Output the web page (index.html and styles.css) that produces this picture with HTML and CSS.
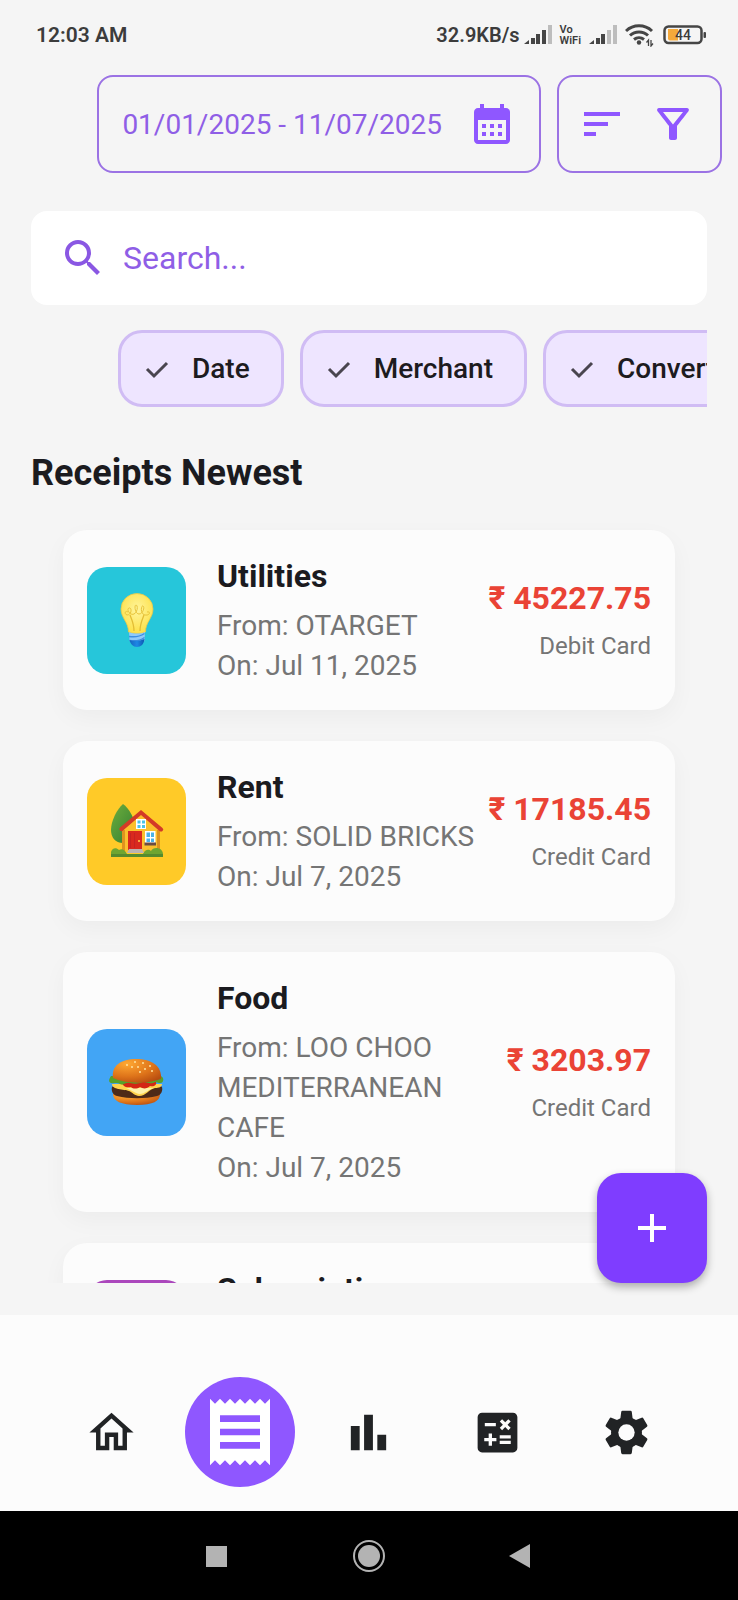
FILE: index.html
```html
<!DOCTYPE html>
<html lang="en">
<head>
<meta charset="utf-8">
<meta name="viewport" content="width=device-width, initial-scale=1">
<title>Receipts</title>
<link rel="stylesheet" href="styles.css">
</head>
<body>
<div class="status">
  <span class="status-time">12:03 AM</span>
  <div class="status-right">
    <span class="status-speed">32.9KB/s</span>
    <svg class="signal" viewBox="0 0 28 20" fill="#454545"><path d="M0 19l5-4v4zM7 13h4v6H7zM12 9h4v10h-4zM18 5h4v14h-4z"/><path fill="#bdbdbd" d="M24 0h4v19h-4z"/></svg>
    <span class="vowifi"><span>Vo</span><span>WiFi</span></span>
    <svg class="signal" viewBox="0 0 28 20" fill="#454545"><path d="M0 19l5-4v4zM7 13h4v6H7zM12 9h4v10h-4z"/><path fill="#bdbdbd" d="M18 5h4v14h-4zM24 0h4v19h-4z"/></svg>
    <svg class="wifi" viewBox="0 0 30 24" fill="none" stroke="#454545" stroke-width="3"><path d="M1 8a19 19 0 0 1 26 0M5 12.500a13 13 0 0 1 18 0M9 16.500a8 8 0 0 1 10 0"/><circle cx="14" cy="19.500" r="2.200" fill="#454545" stroke="none"/><path stroke-width="1.300" d="M23.500 23v-6l-2 2.500M26 17v6l2-2.500"/></svg>
    <svg class="battery" viewBox="0 0 44 20"><rect x="1.500" y="1.500" width="37" height="16.500" rx="4" fill="none" stroke="#454545" stroke-width="2.500"/><path d="M5 4h10v11.500H7a2 2 0 0 1-2-2z" fill="#f5a93b"/><rect x="40.500" y="7" width="2.500" height="6" rx="1" fill="#454545"/><text x="20" y="15" text-anchor="middle" class="battery-text">44</text></svg>
  </div>
</div>

<main class="page">
  <div class="toolbar">
    <button class="box date-box" type="button">
      <span>01/01/2025 - 11/07/2025</span>
      <svg class="icon" viewBox="0 0 24 24"><path d="M19 4h-1V2h-2v2H8V2H6v2H5c-1.110 0-1.990.9-1.990 2L3 20c0 1.100.89 2 2 2h14c1.100 0 2-.9 2-2V6c0-1.100-.9-2-2-2zm0 16H5V10h14v10zM9 14H7v-2h2v2zm4 0h-2v-2h2v2zm4 0h-2v-2h2v2zm-8 4H7v-2h2v2zm4 0h-2v-2h2v2zm4 0h-2v-2h2v2z"/></svg>
    </button>
    <div class="box tools">
      <button class="tool" type="button" aria-label="Sort"><svg class="icon" viewBox="0 0 24 24"><path d="M3 18h6v-2H3v2zM3 6v2h18V6H3zm0 7h12v-2H3v2z"/></svg></button>
      <button class="tool" type="button" aria-label="Filter"><svg class="icon" viewBox="0 0 24 24"><path d="M7 6h10l-5.010 6.300L7 6zm-2.750-.39C6.270 8.200 10 13 10 13v6c0 .55.45 1 1 1h2c.55 0 1-.45 1-1v-6s3.720-4.800 5.740-7.390A.998.998 0 0 0 18.950 4H5.040c-.83 0-1.300.95-.79 1.610z"/></svg></button>
    </div>
  </div>

  <label class="search">
    <svg class="icon" viewBox="0 0 24 24"><path d="M15.500 14h-.79l-.28-.27A6.471 6.471 0 0 0 16 9.500 6.500 6.500 0 1 0 9.500 16c1.610 0 3.090-.59 4.230-1.570l.27.28v.79l5 4.990L20.490 19l-4.990-5zm-6 0C7.010 14 5 11.990 5 9.500S7.010 5 9.500 5 14 7.010 14 9.500 11.990 14 9.500 14z"/></svg>
    <input class="search-input" type="text" placeholder="Search..." aria-label="Search">
  </label>

  <div class="chips">
    <button class="chip" type="button" aria-pressed="true"><svg class="check" viewBox="0 0 24 24"><path d="M2 12l7 7L22 6"/></svg>Date</button>
    <button class="chip" type="button" aria-pressed="true"><svg class="check" viewBox="0 0 24 24"><path d="M2 12l7 7L22 6"/></svg>Merchant</button>
    <button class="chip" type="button" aria-pressed="true"><svg class="check" viewBox="0 0 24 24"><path d="M2 12l7 7L22 6"/></svg>Converted</button>
  </div>

  <h1 class="heading">Receipts Newest</h1>

  <div class="list">
    <article class="card">
      <div class="tile tile-utilities">
        <svg class="emoji" viewBox="0 0 56 56">
          <defs>
            <radialGradient id="glass" cx=".5" cy=".4" r=".6"><stop offset="0" stop-color="#fff59d"/><stop offset="1" stop-color="#fde047"/></radialGradient>
            <linearGradient id="cap" x2="1"><stop stop-color="#1565c0"/><stop offset=".5" stop-color="#1e88e5"/><stop offset="1" stop-color="#0d56b0"/></linearGradient>
          </defs>
          <path d="M19.500 40C19.500 30 12 26 12 17a16 15.500 0 0 1 32 0c0 9-7.500 13-7.500 23-4 2-13 2-17 0z" fill="url(#glass)" stroke="#e8c94a" stroke-width=".8"/>
          <path d="M25 39c0-7-2-11-4-16M31 39c0-7 2-11 4-16" fill="none" stroke="#e3bd35" stroke-width="1.300"/>
          <path d="M19 20c-3-2-4 2-1 3 5 0 5-8 2-7s1 8 5 6 4-9 2-9-1 9 3 9 6-7 4-8-3 8 2 9 6-4 2-3" fill="none" stroke="#e8c43c" stroke-width="1"/>
          <path d="M20 40c5 2 11 2 16 0l-.5 9c-5 2-10 2-15 0z" fill="#90caf9"/>
          <path d="M20 44.500c6 1 11 0 15.500-3M20.500 48.500c6 1 11 0 15-3" fill="none" stroke="#3f8fe0" stroke-width="1.500"/>
          <path d="M20.500 48c5 1.500 10 1 15-1-.5 5-3.500 8-7.500 8s-6.500-3-7.500-7z" fill="url(#cap)"/>
        </svg>
      </div>
      <div class="info">
        <h2 class="title">Utilities</h2>
        <p class="detail">From: OTARGET</p>
        <p class="detail">On: Jul 11, 2025</p>
      </div>
      <div class="payment">
        <span class="amount">₹ 45227.75</span>
        <span class="method">Debit Card</span>
      </div>
    </article>

    <article class="card">
      <div class="tile tile-rent">
        <svg class="emoji" viewBox="0 0 56 56">
          <defs>
            <linearGradient id="tree" x2="1" y2="1"><stop stop-color="#6fae3c"/><stop offset="1" stop-color="#2e7d32"/></linearGradient>
          </defs>
          <path d="M14 1C8 6 2 18 2 27c0 7 4 13 12 13s13-6 13-14C26 16 20 5 14 1z" fill="url(#tree)"/>
          <path d="M13 27L32 11l19 16v22H13z" fill="#fbc02d"/>
          <path d="M13 27h3v22h-3zM48 27h3v22h-3z" fill="#e0931f"/>
          <path d="M11 27.500a2 2 0 0 1 0-3L32 7l21.500 18a2 2 0 0 1 0 3c-1 .8-2 .6-3 0L32 12 14 27.500c-1 1-2 1-3 0z" fill="#d33a27"/>
          <rect x="27" y="16" width="10" height="10" fill="#fff"/>
          <path d="M28.500 17.500h3v3h-3zM33 17.500h3v3h-3zM28.500 22h3v3h-3zM33 22h3v3h-3z" fill="#4cc3e8"/>
          <rect x="19" y="28" width="14" height="19" fill="#d9281e"/>
          <path d="M21.500 30v15M25.500 30v15" stroke="#c62222" stroke-width="1"/>
          <circle cx="30" cy="38" r="1" fill="#ffd54f"/>
          <rect x="36" y="28" width="10.500" height="12" fill="#fff"/>
          <path d="M37.500 29.500h3.500V34h-3.500zM42 29.500h3V34h-3zM37.500 35.500h3.500V39h-3.500zM42 35.500h3V39h-3z" fill="#4cb2e8"/>
          <rect x="35.500" y="39.500" width="11.500" height="3" fill="#6d4c41"/>
          <path d="M2 54v-5c1-4 5-5 8-2 3-2 6 0 8 4h16c2-5 6-5 8-3 2-5 12-4 12 3v3z" fill="#6fa531"/>
          <path d="M18 50l2-4h13l2 4z" fill="#bdb3b0"/>
          <path d="M2 51h52v3H2z" fill="#558b2f"/>
        </svg>
      </div>
      <div class="info">
        <h2 class="title">Rent</h2>
        <p class="detail">From: SOLID BRICKS</p>
        <p class="detail">On: Jul 7, 2025</p>
      </div>
      <div class="payment">
        <span class="amount">₹ 17185.45</span>
        <span class="method">Credit Card</span>
      </div>
    </article>

    <article class="card">
      <div class="tile tile-food">
        <svg class="emoji" viewBox="0 0 56 56">
          <defs>
            <radialGradient id="bun" cx=".3" cy=".2" r=".9"><stop stop-color="#ffa832"/><stop offset=".6" stop-color="#de741a"/><stop offset="1" stop-color="#b84d10"/></radialGradient>
          </defs>
          <path d="M4 40c0 7 8 11 24 11s23-4 23-11z" fill="url(#bun)"/>
          <path d="M3 33c0-3 50-3 50 0 1 4-1 8-5 9-12 3-28 3-40 0-4-1-6-5-5-9z" fill="#4e2a17"/>
          <path d="M3 30h50c0 3-3 4-7 4-6 1-9 8-16 8-4 0-7-4-10-5-5-2-17-1-17-7z" fill="#ffd34d"/>
          <path d="M16 34c4 0 10 6 15 6s9-5 14-6z" fill="#fff0a8"/>
          <path d="M13 28h34c1 3-2 5-6 4-3 3-7 3-10 1-3 2-7 2-9 0-5 1-9-1-9-5z" fill="#d32515"/>
          <path d="M2 22c-2 3-3 6 0 7 3 1 6-1 9 1 4 2 5-2 10-1 5 1 8 1 13-1 5 0 7 3 12 0 4 1 7 2 8-1s-1-5-3-5z" fill="#55a22c"/>
          <path d="M4 24C2 12 12 5 27 5c16 0 26 7 25 20-13 5-36 5-48-1z" fill="url(#bun)"/>
          <g fill="#ffe3a0"><circle cx="26" cy="8" r="1"/><circle cx="34" cy="9" r="1"/><circle cx="41" cy="12" r="1"/><circle cx="29" cy="13" r="1"/><circle cx="36" cy="15" r="1"/><circle cx="23" cy="13" r="1"/><circle cx="43" cy="17" r="1"/><circle cx="31" cy="18" r="1"/><circle cx="18" cy="11" r="1"/></g>
        </svg>
      </div>
      <div class="info">
        <h2 class="title">Food</h2>
        <p class="detail">From: LOO CHOO MEDITERRANEAN CAFE</p>
        <p class="detail">On: Jul 7, 2025</p>
      </div>
      <div class="payment">
        <span class="amount">₹ 3203.97</span>
        <span class="method">Credit Card</span>
      </div>
    </article>

    <article class="card">
      <div class="tile tile-subscriptions"></div>
      <div class="info">
        <h2 class="title">Subscriptions</h2>
      </div>
    </article>
  </div>

  <button class="fab" type="button" aria-label="Add receipt"><svg viewBox="0 0 28 28"><path d="M14 0v28M0 14h28" stroke="#fff" stroke-width="4"/></svg></button>
</main>

<nav class="nav">
  <a class="nav-item" href="#home" aria-label="Home"><svg viewBox="0 0 24 24"><path d="M12 5.690l5 4.500V18h-2v-6H9v6H7v-7.810l5-4.500M12 3L2 12h3v8h6v-6h2v6h6v-8h3L12 3z"/></svg></a>
  <a class="nav-item nav-active" href="#receipts" aria-label="Receipts"><svg viewBox="0 0 24 24"><path d="M18 17H6v-2h12v2zm0-4H6v-2h12v2zm0-4H6V7h12v2zM3 22l1.500-1.500L6 22l1.500-1.500L9 22l1.500-1.500L12 22l1.500-1.500L15 22l1.500-1.500L18 22l1.500-1.500L21 22V2l-1.500 1.500L18 2l-1.500 1.500L15 2l-1.500 1.500L12 2l-1.500 1.500L9 2 7.500 3.500 6 2 4.500 3.500 3 2v20z"/></svg></a>
  <a class="nav-item" href="#stats" aria-label="Statistics"><svg viewBox="0 0 24 24"><path d="M4 9h4v11H4zM16 13h4v7h-4zM10 4h4v16h-4z"/></svg></a>
  <a class="nav-item" href="#calculator" aria-label="Calculator"><svg viewBox="0 0 24 24"><path d="M19 3H5c-1.100 0-2 .9-2 2v14c0 1.100.9 2 2 2h14c1.100 0 2-.9 2-2V5c0-1.100-.9-2-2-2zm-5.970 4.060L14.090 6l1.410 1.410L16.910 6l1.060 1.060-1.410 1.410 1.410 1.410-1.060 1.060-1.410-1.400-1.410 1.410-1.060-1.060 1.410-1.410-1.410-1.420zm-6.780.66h5v1.500h-5v-1.500zM11.500 16h-2v2H8v-2H6v-1.500h2v-2h1.500v2h2V16zm6.500 1.250h-5v-1.500h5v1.500zm0-2.500h-5v-1.500h5v1.500z"/></svg></a>
  <a class="nav-item" href="#settings" aria-label="Settings"><svg viewBox="0 0 24 24">
    <defs><path id="teeth" d="M9.600 2.700a.6.6 0 0 1 .6-.5h3.600a.6.6 0 0 1 .6.500l.5 4v10.600l-.5 4a.6.6 0 0 1-.6.500h-3.600a.6.6 0 0 1-.6-.5l-.5-4V6.700z"/></defs>
    <circle cx="12" cy="12" r="7"/>
    <use href="#teeth"/><use href="#teeth" transform="rotate(60 12 12)"/><use href="#teeth" transform="rotate(120 12 12)"/>
    <circle cx="12" cy="12" r="3.700" fill="#fcfcfc"/></svg></a>
</nav>

<div class="system-bar">
  <button class="system-key" type="button" aria-label="Recent apps"><svg viewBox="0 0 32 32"><path d="M5 6h21v21H5z"/></svg></button>
  <button class="system-key" type="button" aria-label="Home screen"><svg viewBox="0 0 32 32"><circle cx="16" cy="16" r="11"/><circle cx="16" cy="16" r="15" fill="none" stroke="#b3b3b3" stroke-width="2"/></svg></button>
  <button class="system-key" type="button" aria-label="Back"><svg viewBox="0 0 32 32"><path d="M4 16L25 4v24z"/></svg></button>
</div>
</body>
</html>
```

FILE: styles.css
```css
* {
  box-sizing: border-box;
}

body {
  margin: 0;
  height: 100vh;
  display: flex;
  flex-direction: column;
  background: #f5f5f5;
  color: #1b1b1f;
  font-family: Roboto, "Noto Sans", sans-serif;
}

button {
  font: inherit;
  color: inherit;
  cursor: pointer;
}

svg {
  display: block;
  flex: none;
}

/* Status bar */
.status {
  display: flex;
  align-items: center;
  justify-content: space-between;
  height: 70px;
  padding: 0 31px 0 36px;
  color: #3c3c3c;
  font-weight: 600;
}

.status-time {
  font-size: 21px;
}

.status-right {
  display: flex;
  align-items: center;
  gap: 8px;
}

.status-speed {
  font-size: 20px;
  margin-right: -4px;
}

.signal {
  width: 28px;
  height: 20px;
}

.vowifi {
  display: flex;
  flex-direction: column;
  font-size: 11px;
  line-height: 11px;
}

.wifi {
  width: 30px;
  height: 24px;
}

.battery {
  width: 44px;
  height: 20px;
}

.battery-text {
  font-size: 14px;
  font-weight: 500;
  fill: #3c3c3c;
}

/* Page */
.page {
  position: relative;
  flex: 1;
  min-height: 0;
  display: flex;
  flex-direction: column;
  padding: 5px 0 32px;
}

.icon {
  width: 48px;
  height: 48px;
  fill: #8f57ff;
}

.toolbar {
  display: flex;
  justify-content: flex-end;
  gap: 16px;
  padding: 0 16px;
}

.box {
  display: flex;
  align-items: center;
  height: 98px;
  border: 2px solid #9b72e4;
  border-radius: 16px;
  background: none;
}

.date-box {
  gap: 26px;
  padding: 0 23px;
  color: #8f5ee6;
  font-size: 28px;
}

.tools {
  gap: 23px;
  padding: 0 23px 0 19px;
}

.tool {
  padding: 0;
  border: 0;
  background: none;
}

.search {
  display: flex;
  align-items: center;
  gap: 16px;
  height: 94px;
  margin: 38px 31px 0;
  padding: 0 28px;
  border-radius: 16px;
  background: #fff;
}

.search .icon {
  fill: #8a57e3;
}

.search-input {
  flex: 1;
  min-width: 0;
  padding: 0;
  border: 0;
  outline: 0;
  background: none;
  color: #8f5ee6;
  font: 32px Roboto, "Noto Sans", sans-serif;
}

.search-input::placeholder {
  color: #8f5ee6;
  opacity: 1;
}

.chips {
  display: flex;
  flex: none;
  gap: 16px;
  margin: 25px 31px 0 118px;
  overflow-x: auto;
  scrollbar-width: none;
}

.chip {
  display: flex;
  flex: none;
  align-items: center;
  gap: 23px;
  height: 77px;
  padding: 0 31px 0 24px;
  border: 3px solid #d0bcf4;
  border-radius: 24px;
  background: #eee5ff;
  color: #1d1b20;
  font-size: 28px;
  font-weight: 500;
}

.check {
  width: 24px;
  height: 24px;
  fill: none;
  stroke: #49454f;
  stroke-width: 3;
}

.heading {
  margin: 44px 31px 0;
  font-size: 36px;
  line-height: 44px;
  font-weight: 700;
}

/* Receipt list */
.list {
  flex: 1;
  min-height: 0;
  display: flex;
  flex-direction: column;
  gap: 31px;
  margin-top: 11px;
  padding: 24px 63px 0;
  overflow-y: auto;
  scrollbar-width: none;
}

.card {
  display: flex;
  flex: none;
  align-items: center;
  min-height: 180px;
  padding: 24px;
  border-radius: 24px;
  background: #fcfcfc;
  box-shadow: 0 8px 24px rgba(0, 0, 0, 0.04);
}

.tile {
  display: flex;
  flex: none;
  align-items: center;
  justify-content: center;
  width: 99px;
  height: 107px;
  margin-right: 31px;
  border-radius: 20px;
}

.tile-utilities {
  background: #26c6da;
}

.tile-rent {
  background: #ffca28;
}

.tile-food {
  background: #42a5f5;
}

.tile-subscriptions {
  background: #ab47bc;
}

.emoji {
  width: 56px;
  height: 56px;
}

.info {
  flex: 1;
  align-self: flex-start;
  min-width: 0;
}

.title {
  margin: 0 0 8px;
  font-size: 32px;
  line-height: 44px;
  font-weight: 700;
}

.detail {
  margin: 0;
  color: #757575;
  font-size: 28px;
  line-height: 40px;
}

.payment {
  display: flex;
  flex: none;
  flex-direction: column;
  align-items: flex-end;
  gap: 12px;
}

.amount {
  color: #ea4335;
  font-size: 32px;
  line-height: 40px;
  font-weight: 700;
}

.method {
  color: #757575;
  font-size: 24px;
  line-height: 32px;
}

.fab {
  position: absolute;
  right: 31px;
  bottom: 32px;
  display: flex;
  align-items: center;
  justify-content: center;
  width: 110px;
  height: 110px;
  padding: 0;
  border: 0;
  border-radius: 24px;
  background: #7f3dff;
  box-shadow: 0 4px 8px rgba(0, 0, 0, 0.3);
}

.fab svg {
  width: 28px;
  height: 28px;
}

/* App navigation */
.nav {
  display: flex;
  padding: 62px 47px 24px;
  background: #fcfcfc;
}

.nav-item {
  display: flex;
  flex: 1;
  align-items: center;
  justify-content: center;
  height: 110px;
}

.nav-item svg {
  width: 53px;
  height: 53px;
  fill: #212325;
}

.nav-active {
  flex: none;
  width: 110px;
  margin: 0 9px;
  border-radius: 50%;
  background: #8f57ff;
}

.nav-active svg {
  width: 80px;
  height: 80px;
  fill: #fff;
}

/* System navigation */
.system-bar {
  display: flex;
  align-items: center;
  justify-content: center;
  gap: 120px;
  height: 89px;
  background: #000;
}

.system-key {
  padding: 0;
  border: 0;
  background: none;
}

.system-key svg {
  width: 32px;
  height: 32px;
  fill: #b3b3b3;
}
```
